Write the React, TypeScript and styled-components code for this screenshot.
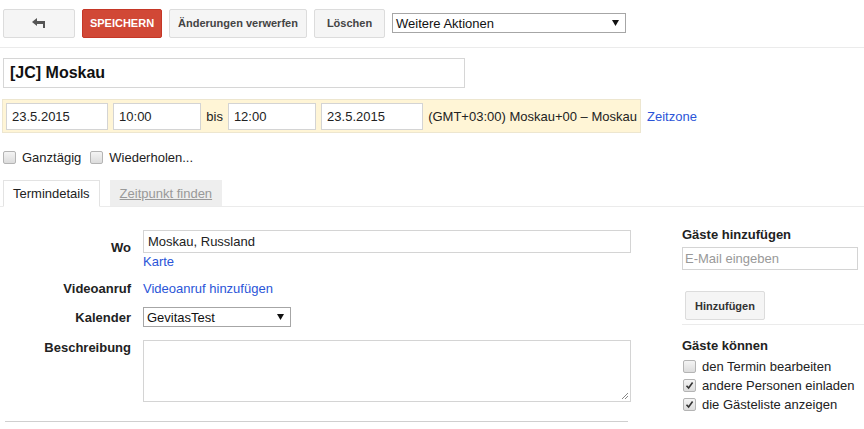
import React from 'react'
import styled, { createGlobalStyle } from 'styled-components'

const GlobalStyle = createGlobalStyle`
  html, body {
    margin: 0;
    padding: 0;
    background: #fff;
  }
  body {
    font-family: 'Liberation Sans', Arial, sans-serif;
    font-size: 13px;
    color: #222;
  }
`

const Page = styled.div`
  width: 864px;
  height: 429px;
  overflow: hidden;
`

const Toolbar = styled.div`
  display: flex;
  align-items: center;
  gap: 7px;
  height: 48px;
  padding: 0 0 1px 3px;
  box-sizing: border-box;
  border-bottom: 1px solid #ebebeb;
`

const Button = styled.button<{ $primary?: boolean; $width?: number }>`
  height: 29px;
  ${(p) => (p.$width ? `width: ${p.$width}px;` : '')}
  padding: 0 8px;
  box-sizing: border-box;
  border-radius: 2px;
  border: 1px solid ${(p) => (p.$primary ? '#c53727' : '#dcdcdc')};
  background: ${(p) => (p.$primary ? '#d14836' : '#f5f5f5')};
  color: ${(p) => (p.$primary ? '#fff' : '#444')};
  font-family: 'Liberation Sans', Arial, sans-serif;
  font-size: 11px;
  font-weight: bold;
  text-transform: ${(p) => (p.$primary ? 'uppercase' : 'none')};
  display: inline-flex;
  align-items: center;
  justify-content: center;
  cursor: pointer;
`

const FakeSelect = styled.div<{ $width: number; $height: number }>`
  width: ${(p) => p.$width}px;
  height: ${(p) => p.$height}px;
  box-sizing: border-box;
  border: 1px solid #a6a6a6;
  background: #fff;
  display: flex;
  align-items: center;
  justify-content: space-between;
  padding: 0 6px 0 3px;
  font-size: 13px;
  color: #111;
`

const Arrow = () => (
  <svg width="7" height="6" viewBox="0 0 7 6">
    <path d="M0 0 H7 L3.5 6 Z" fill="#111" />
  </svg>
)

const BackIcon = () => (
  <svg width="14" height="10" viewBox="0 0 14 10">
    <path d="M0 4 L5 0 V3 H13 V10 H11 V6 H5 V8 Z" fill="#555" />
  </svg>
)

const TitleInput = styled.div`
  margin: 10px 0 0 3px;
  width: 462px;
  height: 30px;
  box-sizing: border-box;
  border: 1px solid #d6d6d6;
  display: flex;
  align-items: center;
  padding-left: 6px;
  font-size: 16px;
  font-weight: bold;
  color: #111;
`

const DateRowWrap = styled.div`
  display: flex;
  align-items: center;
  margin-top: 11px;
`

const DateBar = styled.div`
  display: flex;
  align-items: center;
  gap: 5px;
  margin-left: 2px;
  width: 639px;
  height: 34px;
  box-sizing: border-box;
  padding: 0 3px;
  background: #fff5d6;
  border: 1px solid #ede6cf;
`

const TextBox = styled.div<{ $width: number; $height?: number }>`
  width: ${(p) => p.$width}px;
  height: ${(p) => p.$height ?? 27}px;
  box-sizing: border-box;
  border: 1px solid #d4d4d4;
  background: #fff;
  display: flex;
  align-items: center;
  padding-left: 5px;
  font-size: 13px;
  color: #222;
`

const Plain = styled.span`
  font-size: 13px;
  color: #222;
  white-space: nowrap;
`

const Link = styled.a`
  color: #2b55d8;
  font-size: 13px;
  text-decoration: none;
  cursor: pointer;
`

const ZoneLink = styled(Link)`
  margin-left: 6px;
`

const CheckRow = styled.div`
  display: flex;
  align-items: center;
  height: 18px;
  margin-top: 15px;
  padding-left: 3px;
`

const CheckLabel = styled.label<{ $gap?: number }>`
  display: inline-flex;
  align-items: center;
  gap: 6px;
  margin-right: ${(p) => p.$gap ?? 0}px;
  font-size: 13px;
  color: #222;
`

const Box = styled.span`
  width: 11px;
  height: 11px;
  border: 1px solid #b4b4b4;
  border-radius: 2px;
  background: linear-gradient(#f4f4f4, #dcdcdc);
  display: inline-flex;
  align-items: center;
  justify-content: center;
  flex-shrink: 0;
`

const Checkbox = ({ checked }: { checked?: boolean }) => (
  <Box>
    {checked && (
      <svg width="9" height="9" viewBox="0 0 9 9">
        <path d="M1.5 4.8 L3.6 7 L7.6 1.6" stroke="#333" strokeWidth="1.6" fill="none" />
      </svg>
    )}
  </Box>
)

const Tabs = styled.div`
  display: flex;
  align-items: flex-end;
  gap: 10px;
  margin-top: 13px;
  padding-left: 3px;
  height: 27px;
  border-bottom: 1px solid #ebebeb;
`

const Tab = styled.div<{ $active?: boolean }>`
  height: ${(p) => (p.$active ? 27 : 26)}px;
  box-sizing: border-box;
  padding: 0 9px;
  display: flex;
  align-items: center;
  font-size: 13px;
  margin-bottom: ${(p) => (p.$active ? -1 : 0)}px;
  background: ${(p) => (p.$active ? '#fff' : '#eeeeee')};
  border: 1px solid ${(p) => (p.$active ? '#e3e3e3' : '#eeeeee')};
  border-bottom-color: ${(p) => (p.$active ? '#fff' : '#eeeeee')};
  color: ${(p) => (p.$active ? '#222' : '#999')};
  text-decoration: ${(p) => (p.$active ? 'none' : 'underline')};
`

const Main = styled.div`
  display: flex;
`

const LeftCol = styled.div`
  width: 640px;
  padding-top: 23px;
`

const FormRow = styled.div<{ $mt?: number }>`
  display: grid;
  grid-template-columns: 131px 1fr;
  column-gap: 12px;
  margin-top: ${(p) => p.$mt ?? 0}px;
`

const Label = styled.div<{ $pt?: number }>`
  text-align: right;
  font-weight: bold;
  font-size: 13px;
  color: #222;
  padding-top: ${(p) => p.$pt ?? 0}px;
`

const Field = styled.div`
  display: flex;
  flex-direction: column;
  align-items: flex-start;
`

const LocationBox = styled(TextBox)`
  padding-left: 4px;
`

const KarteLink = styled(Link)`
  margin-top: 1px;
  line-height: 15px;
`

const TextArea = styled.div`
  width: 488px;
  height: 62px;
  box-sizing: border-box;
  border: 1px solid #d4d4d4;
  position: relative;
`

const Grip = styled.svg`
  position: absolute;
  right: 2px;
  bottom: 2px;
`

const Divider = styled.div`
  margin: 19px 0 0 5px;
  width: 623px;
  border-top: 1px solid #cfcfcf;
`

const RightCol = styled.div`
  margin-left: 42px;
  width: 182px;
  padding-top: 20px;
`

const Heading = styled.div`
  font-weight: bold;
  font-size: 13px;
  color: #222;
  line-height: 16px;
`

const EmailBox = styled(TextBox)`
  margin-top: 4px;
  color: #999;
  padding-left: 2px;
`

const AddButton = styled(Button)`
  margin: 21px 0 0 3px;
  color: #333;
`

const Rule = styled.div`
  margin-top: 4px;
  border-top: 1px solid #ebebeb;
`

const GuestList = styled.div`
  margin-top: 13px;
`

const GuestHeading = styled(Heading)`
  margin-bottom: 3px;
`

const GuestOption = styled(CheckLabel)`
  display: flex;
  height: 19px;
  padding-left: 1px;
`

export default function App() {
  return (
    <Page>
      <GlobalStyle />
      <Toolbar>
        <Button $width={72}>
          <BackIcon />
        </Button>
        <Button $primary $width={80}>
          Speichern
        </Button>
        <Button $width={138}>Änderungen verwerfen</Button>
        <Button $width={71}>Löschen</Button>
        <FakeSelect $width={234} $height={20}>
          <span>Weitere Aktionen</span>
          <Arrow />
        </FakeSelect>
      </Toolbar>

      <TitleInput>[JC] Moskau</TitleInput>

      <DateRowWrap>
        <DateBar>
          <TextBox $width={103}>23.5.2015</TextBox>
          <TextBox $width={89}>10:00</TextBox>
          <Plain>bis</Plain>
          <TextBox $width={89}>12:00</TextBox>
          <TextBox $width={103}>23.5.2015</TextBox>
          <Plain>(GMT+03:00) Moskau+00 – Moskau</Plain>
        </DateBar>
        <ZoneLink>Zeitzone</ZoneLink>
      </DateRowWrap>

      <CheckRow>
        <CheckLabel $gap={9}>
          <Checkbox />
          Ganztägig
        </CheckLabel>
        <CheckLabel>
          <Checkbox />
          Wiederholen...
        </CheckLabel>
      </CheckRow>

      <Tabs>
        <Tab $active>Termindetails</Tab>
        <Tab>Zeitpunkt finden</Tab>
      </Tabs>

      <Main>
        <LeftCol>
          <FormRow>
            <Label $pt={10}>Wo</Label>
            <Field>
              <LocationBox $width={488} $height={23}>
                Moskau, Russland
              </LocationBox>
              <KarteLink>Karte</KarteLink>
            </Field>
          </FormRow>
          <FormRow $mt={12}>
            <Label>Videoanruf</Label>
            <Field>
              <Link>Videoanruf hinzufügen</Link>
            </Field>
          </FormRow>
          <FormRow $mt={11}>
            <Label $pt={3}>Kalender</Label>
            <Field>
              <FakeSelect $width={148} $height={20}>
                <span>GevitasTest</span>
                <Arrow />
              </FakeSelect>
            </Field>
          </FormRow>
          <FormRow $mt={13}>
            <Label>Beschreibung</Label>
            <Field>
              <TextArea>
                <Grip width="7" height="7" viewBox="0 0 7 7">
                  <path d="M1 7 L7 1 M4 7 L7 4" stroke="#888" strokeWidth="1" />
                </Grip>
              </TextArea>
            </Field>
          </FormRow>
          <Divider />
        </LeftCol>

        <RightCol>
          <Heading>Gäste hinzufügen</Heading>
          <EmailBox $width={176} $height={23}>E-Mail eingeben</EmailBox>
          <AddButton $width={80}>Hinzufügen</AddButton>
          <Rule />
          <GuestList>
            <GuestHeading>Gäste können</GuestHeading>
            <GuestOption>
              <Checkbox />
              den Termin bearbeiten
            </GuestOption>
            <GuestOption>
              <Checkbox checked />
              andere Personen einladen
            </GuestOption>
            <GuestOption>
              <Checkbox checked />
              die Gästeliste anzeigen
            </GuestOption>
          </GuestList>
        </RightCol>
      </Main>
    </Page>
  )
}
